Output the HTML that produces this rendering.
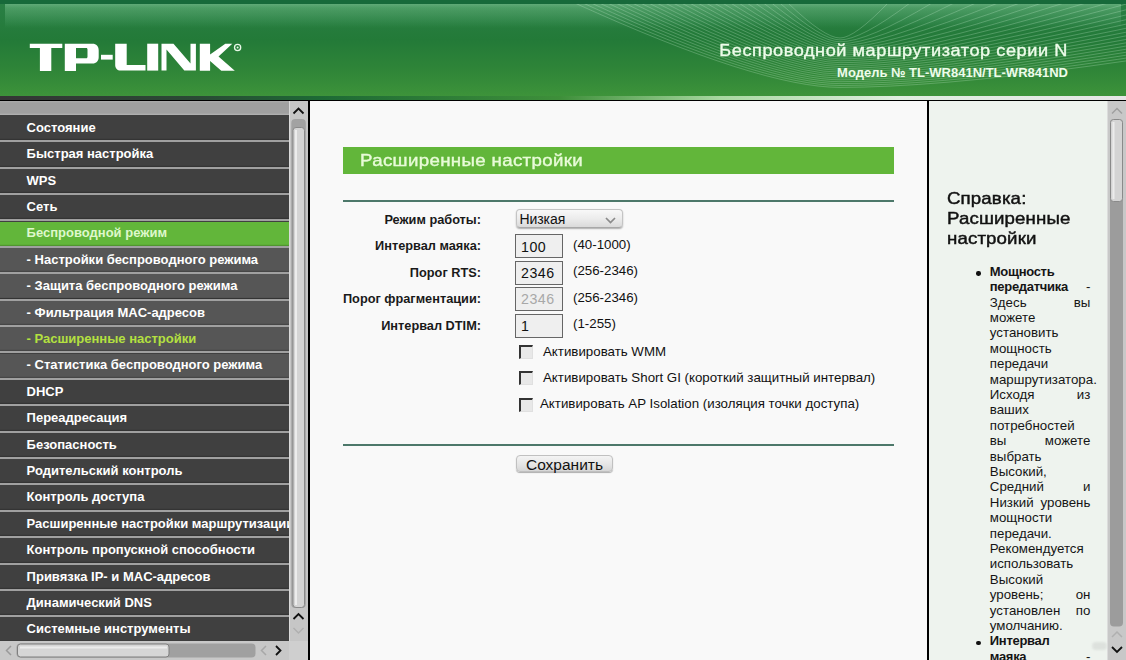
<!DOCTYPE html>
<html><head><meta charset="utf-8">
<style>
*{margin:0;padding:0;box-sizing:border-box}
html,body{width:1126px;height:660px;overflow:hidden;background:#f9f9f9;font-family:"Liberation Sans",sans-serif}
.abs{position:absolute}
#hdr{left:0;top:0;width:1126px;height:96px;background:linear-gradient(to bottom,#17693a 0px,#17693a 4px,#2a7f45 4px,#237a38 40px,#2f8538 70px,#3d933a 96px);overflow:hidden}
#gloss{left:5px;top:4px;width:1116px;height:24px;background:linear-gradient(to bottom,rgba(160,220,180,0.45) 0px,rgba(140,210,160,0.35) 4px,rgba(120,200,150,0.12) 18px,rgba(120,200,150,0) 24px)}
#strip{left:0;top:96px;width:1126px;height:4px;background:linear-gradient(to right,#353535 0px,#2a4a35 200px,#1d6a35 320px,#3e8f3a 560px,#a8d8a0 720px,#e0eee0 900px,#e6e6e6 1126px)}
#blk{left:0;top:100px;width:1126px;height:1px;background:#000}
.ttl{color:#eefcea;white-space:nowrap;text-align:right;right:58px}
/* sidebar */
#side{left:0;top:101px;width:289px;height:540px;background:#404040;overflow:hidden}
#sidetop{left:0;top:0;width:289px;height:14px;background:linear-gradient(#acacac,#a0a0a0 2px,#a0a0a0 12px,#b4b4b4)}
.rw{position:absolute;left:0;width:289px}
.tx{position:absolute;left:26.6px;font-weight:bold;font-size:13px;line-height:14px;white-space:nowrap;color:#fff}
.sep{position:absolute;left:0;width:289px;height:2.2px;background:#a0a0a0;box-shadow:0 -1.2px 0 rgba(0,0,0,0.18)}
#vsb{left:289px;top:101px;width:20px;height:540px;background:#c6c6c6}
#vline{left:308px;top:101px;width:2px;height:559px;background:#000}
#hsb{left:0;top:641px;width:289px;height:19px;background:#c8c8c8}
#corner{left:289px;top:641px;width:19px;height:19px;background:#cfcfcf}
/* main */
#main{left:310px;top:101px;width:617px;height:559px;background:#f9f9f9}
#vline2{left:927px;top:101px;width:2px;height:559px;background:#000}
#help{left:929px;top:101px;width:178px;height:559px;background:#eef3ee}
#hvsb{left:1107px;top:101px;width:19px;height:559px;background:#c8c8c8}
.lbl{position:absolute;right:645px;font-weight:bold;font-size:12.75px;line-height:14px;color:#1a1a1a;white-space:nowrap}
.inp{position:absolute;left:515px;width:48px;height:24px;border:1px solid #666;background:#efefef;font-size:14.2px;line-height:15px;letter-spacing:0.5px;padding:4.3px 0 0 5px;color:#111}
.rng{position:absolute;left:573px;font-size:13.3px;line-height:15px;color:#111;white-space:nowrap}
.cb{position:absolute;left:519px;width:14px;height:14px;border-top:2px solid #333;border-left:2px solid #333;border-right:1px solid #e0e0e0;border-bottom:1px solid #e0e0e0;background:#e8e8e8}
.cbt{position:absolute;font-size:13.3px;line-height:15px;color:#111;white-space:nowrap}
.sel{border:1px solid #c4c4c4;border-bottom-color:#a8a8a8;border-radius:4px;background:linear-gradient(#f8f8f8,#ececec 50%,#dadada);box-shadow:0 1px 1.5px rgba(0,0,0,0.3);font-size:14px;line-height:18.2px;padding-left:2.6px;color:#111;letter-spacing:-0.05px}
.btn{border:1px solid #c0c0c0;border-radius:4px;background:linear-gradient(#f4f4f4,#e4e4e4 60%,#d6d6d6);box-shadow:0 1px 1px rgba(0,0,0,0.3);font-size:15.5px;line-height:16.5px;padding-top:0.5px;text-align:center;color:#111}
.hl{position:absolute;left:989.8px;width:100.6px;font-size:13.3px;line-height:15.4px;color:#151515;white-space:nowrap}
.hj{display:flex;justify-content:space-between}
.hl b{font-size:13px;letter-spacing:-0.3px}
.bul{width:4.3px;height:4.3px;border-radius:50%;background:#111}
.help p{margin:0}
</style></head><body>
<div id="hdr" class="abs">
  <div id="gloss" class="abs"></div>
  <svg class="abs" style="left:0;top:4px" width="1126" height="92" viewBox="0 4 1126 92"><path d="M788.0 3Q824.4 38.0 840 38.0Q854.4 38.0 888.0 3M779.8 3Q821.9 39.9 840 39.9Q861.0 39.9 910.0 3M771.6 3Q819.5 41.8 840 41.8Q867.6 41.8 932.0 3M763.4 3Q817.0 43.7 840 43.7Q874.2 43.7 954.0 3M755.2 3Q814.6 45.6 840 45.6Q880.8 45.6 976.0 3M747.0 3Q812.1 47.5 840 47.5Q887.4 47.5 998.0 3M738.8 3Q809.6 49.4 840 49.4Q894.0 49.4 1020.0 3M730.6 3Q807.2 51.3 840 51.3Q900.6 51.3 1042.0 3M722.4 3Q804.7 53.2 840 53.2Q907.2 53.2 1064.0 3M714.2 3Q802.3 55.1 840 55.1Q913.8 55.1 1086.0 3M706.0 3Q799.8 57.0 840 57.0Q920.4 57.0 1108.0 3M697.8 3Q797.3 58.9 840 58.9Q927.0 58.9 1130.0 3M689.6 3Q794.9 60.8 840 60.8Q933.6 60.8 1152.0 3M681.4 3Q792.4 62.7 840 62.7Q940.2 62.7 1174.0 3M673.2 3Q790.0 64.6 840 64.6Q946.8 64.6 1196.0 3M665.0 3Q787.5 66.5 840 66.5Q953.4 66.5 1218.0 3M656.8 3Q785.0 68.4 840 68.4Q960.0 68.4 1240.0 3M648.6 3Q782.6 70.3 840 70.3Q966.6 70.3 1262.0 3M640.4 3Q780.1 72.2 840 72.2Q973.2 72.2 1284.0 3M632.2 3Q777.7 74.1 840 74.1Q979.8 74.1 1306.0 3M624.0 3Q775.2 76.0 840 76.0Q986.4 76.0 1328.0 3M615.8 3Q772.7 77.9 840 77.9Q993.0 77.9 1350.0 3M607.6 3Q770.3 79.8 840 79.8Q999.6 79.8 1372.0 3M599.4 3Q767.8 81.7 840 81.7Q1006.2 81.7 1394.0 3M591.2 3Q765.4 83.6 840 83.6Q1012.8 83.6 1416.0 3M583.0 3Q762.9 85.5 840 85.5Q1019.4 85.5 1438.0 3M574.8 3Q760.4 87.4 840 87.4Q1026.0 87.4 1460.0 3" fill="none" stroke="#d0f4d8" stroke-opacity="0.26" stroke-width="1"/></svg>
  <svg class="abs" style="left:0;top:0" width="1126" height="96" viewBox="0 0 1126 96">
    <g fill="#ffffff">
      <path d="M29.8 43.7H62.3V48.1H51.3V70.9H39.9V48.1H29.8Z"/>
      <path d="M64.8 43.7H92.5C96.3 43.7 98.7 46.3 98.7 50.2V57C98.7 60.9 96.3 63.5 92.5 63.5H76V70.9H64.8ZM76 48.1V58.2H86.2C87.1 58.2 87.5 57.6 87.5 56.7V49.6C87.5 48.7 87.1 48.1 86.2 48.1Z"/>
      <path d="M101 54.8H112.7V59.6H101Z"/>
      <path d="M115.2 43.7H126.7V65.1H145.5V70.6H120.5C117.5 70.6 115.2 68.3 115.2 65.3Z"/>
      <path d="M147.2 43.7H158.2V70.6H147.2Z"/>
      <path d="M161.5 43.7H173.5L190.5 63.6V43.7H195.9V70.6H184.3L166.5 49.6V70.6H161.5Z"/>
      <path d="M199.8 43.7H210.1V54.5L225.3 43.7H232.3L218.5 56.5L234.8 70.8H221.3L210.1 61V70.8H199.8Z"/>
      <circle cx="237.6" cy="47.5" r="3.1" fill="none" stroke="#e8f8e8" stroke-width="1.3"/>
      <circle cx="237.6" cy="47.5" r="1" fill="#e8f8e8"/>
    </g>
  </svg>
  <div class="abs ttl" style="top:41px;font-size:16.5px;font-weight:normal;letter-spacing:0.5px;-webkit-text-stroke:0.35px #eefcea;right:58.5px;transform:scaleX(1.1);transform-origin:100% 50%">Беспроводной маршрутизатор серии N</div>
  <div class="abs ttl" style="top:64.7px;font-size:13px;font-weight:bold">Модель № TL-WR841N/TL-WR841ND</div>
</div>
<div id="strip" class="abs"></div>
<div id="blk" class="abs"></div>

<div id="side" class="abs">
  <div id="sidetop" class="abs"></div>
  <div class="rw" style="top:14.0px;height:25.0px;background:#404040"></div>
  <div class="sep" style="top:39.1px"></div>
  <div class="tx" style="top:19.8px;color:#ffffff">Состояние</div>
  <div class="rw" style="top:41.4px;height:24.0px;background:#404040"></div>
  <div class="sep" style="top:65.5px"></div>
  <div class="tx" style="top:46.2px;color:#ffffff">Быстрая настройка</div>
  <div class="rw" style="top:67.8px;height:24.0px;background:#404040"></div>
  <div class="sep" style="top:91.9px"></div>
  <div class="tx" style="top:72.6px;color:#ffffff">WPS</div>
  <div class="rw" style="top:94.2px;height:24.0px;background:#404040"></div>
  <div class="sep" style="top:118.3px"></div>
  <div class="tx" style="top:99.0px;color:#ffffff">Сеть</div>
  <div class="rw" style="top:120.6px;height:24.0px;background:#62b63a"></div>
  <div class="sep" style="top:144.7px"></div>
  <div class="tx" style="top:125.4px;color:#def8cc">Беспроводной режим</div>
  <div class="rw" style="top:147.0px;height:24.0px;background:#565656"></div>
  <div class="sep" style="top:171.1px"></div>
  <div class="tx" style="top:151.8px;color:#ffffff">- Настройки беспроводного режима</div>
  <div class="rw" style="top:173.4px;height:24.0px;background:#565656"></div>
  <div class="sep" style="top:197.5px"></div>
  <div class="tx" style="top:178.2px;color:#ffffff">- Защита беспроводного режима</div>
  <div class="rw" style="top:199.8px;height:24.0px;background:#565656"></div>
  <div class="sep" style="top:223.9px"></div>
  <div class="tx" style="top:204.6px;color:#ffffff">- Фильтрация MAC-адресов</div>
  <div class="rw" style="top:226.2px;height:24.0px;background:#565656"></div>
  <div class="sep" style="top:250.3px"></div>
  <div class="tx" style="top:231.0px;color:#b4e040">- Расширенные настройки</div>
  <div class="rw" style="top:252.6px;height:24.0px;background:#565656"></div>
  <div class="sep" style="top:276.7px"></div>
  <div class="tx" style="top:257.4px;color:#ffffff">- Статистика беспроводного режима</div>
  <div class="rw" style="top:279.0px;height:24.0px;background:#404040"></div>
  <div class="sep" style="top:303.1px"></div>
  <div class="tx" style="top:283.8px;color:#ffffff">DHCP</div>
  <div class="rw" style="top:305.4px;height:24.0px;background:#404040"></div>
  <div class="sep" style="top:329.5px"></div>
  <div class="tx" style="top:310.2px;color:#ffffff">Переадресация</div>
  <div class="rw" style="top:331.8px;height:24.0px;background:#404040"></div>
  <div class="sep" style="top:355.9px"></div>
  <div class="tx" style="top:336.6px;color:#ffffff">Безопасность</div>
  <div class="rw" style="top:358.2px;height:24.0px;background:#404040"></div>
  <div class="sep" style="top:382.3px"></div>
  <div class="tx" style="top:363.0px;color:#ffffff">Родительский контроль</div>
  <div class="rw" style="top:384.6px;height:24.0px;background:#404040"></div>
  <div class="sep" style="top:408.7px"></div>
  <div class="tx" style="top:389.4px;color:#ffffff">Контроль доступа</div>
  <div class="rw" style="top:411.0px;height:24.0px;background:#404040"></div>
  <div class="sep" style="top:435.1px"></div>
  <div class="tx" style="top:415.8px;color:#ffffff">Расширенные настройки маршрутизации</div>
  <div class="rw" style="top:437.4px;height:24.0px;background:#404040"></div>
  <div class="sep" style="top:461.5px"></div>
  <div class="tx" style="top:442.2px;color:#ffffff">Контроль пропускной способности</div>
  <div class="rw" style="top:463.8px;height:24.0px;background:#404040"></div>
  <div class="sep" style="top:487.9px"></div>
  <div class="tx" style="top:468.6px;color:#ffffff">Привязка IP- и MAC-адресов</div>
  <div class="rw" style="top:490.2px;height:24.0px;background:#404040"></div>
  <div class="sep" style="top:514.3px"></div>
  <div class="tx" style="top:495.0px;color:#ffffff">Динамический DNS</div>
  <div class="rw" style="top:516.6px;height:24.0px;background:#404040"></div>
  <div class="sep" style="top:540.7px"></div>
  <div class="tx" style="top:521.4px;color:#ffffff">Системные инструменты</div>
</div>
<div id="vsb" class="abs"></div>
<div class="abs" style="left:289px;top:101px;width:1px;height:540px;background:#dadada"></div>
<svg class="abs" style="left:289px;top:101px" width="19" height="540" viewBox="0 0 19 540">
  <path d="M4.5 12.5L9.5 7.5L14.5 12.5" fill="none" stroke="#111" stroke-width="1.8"/>
  <rect x="2.3" y="18" width="14.5" height="489" rx="4" fill="#a2a2a2"/>
  <rect x="4" y="26.5" width="11.5" height="480" rx="3" fill="#d4d4d4" stroke="#8a8a8a" stroke-width="1"/>
  <rect x="6" y="29" width="2" height="475" fill="#ececec"/>
  <path d="M4.5 518L9.5 513L14.5 518" fill="none" stroke="#111" stroke-width="1.8"/>
  <path d="M4.5 527L9.5 532L14.5 527" fill="none" stroke="#b0b0b0" stroke-width="1.5"/>
</svg>
<div id="hsb" class="abs"></div>
<svg class="abs" style="left:0;top:641px" width="289" height="19" viewBox="0 0 289 19">
  <path d="M11 5L6.5 9.5L11 14" fill="none" stroke="#9a9a9a" stroke-width="1.5"/>
  <rect x="16.5" y="2.5" width="239" height="14" rx="4" fill="#a0a0a0"/>
  <rect x="17.5" y="3" width="151.5" height="13" rx="3" fill="#d6d6d6" stroke="#7f7f7f" stroke-width="1"/>
  <rect x="20" y="5.5" width="147" height="2" fill="#ececec"/>
  <path d="M266 5L261.5 9.5L266 14" fill="none" stroke="#a8a8a8" stroke-width="1.5"/>
  <path d="M276 5L280.5 9.5L276 14" fill="none" stroke="#111" stroke-width="1.8"/>
</svg>
<div id="corner" class="abs"></div>
<div id="vline" class="abs"></div>

<div id="main" class="abs"></div>
<div class="abs" style="left:343px;top:147px;width:551px;height:27px;background:#62b63a"></div>
<div class="abs" style="left:360px;top:150.8px;font-size:17px;line-height:20px;font-weight:normal;letter-spacing:0.3px;-webkit-text-stroke:0.4px #e8fbd8;color:#e8fbd8;white-space:nowrap;transform:scaleX(1.1);transform-origin:0 0">Расширенные настройки</div>
<div class="abs" style="left:343px;top:200px;width:551px;height:1.6px;background:#4d786a"></div>
<div class="lbl" style="top:213px">Режим работы:</div>
<div class="lbl" style="top:239.4px">Интервал маяка:</div>
<div class="lbl" style="top:265.8px">Порог RTS:</div>
<div class="lbl" style="top:292.2px">Порог фрагментации:</div>
<div class="lbl" style="top:318.6px">Интервал DTIM:</div>
<div class="sel abs" style="left:515.8px;top:209px;width:107.6px;height:19px">Низкая<svg class="abs" style="right:6px;top:6.5px" width="11" height="7" viewBox="0 0 11 7"><path d="M1 1L5.5 5.5L10 1" fill="none" stroke="#8a8a8a" stroke-width="1.7"/></svg></div>
<div class="inp" style="top:234.4px">100</div>
<div class="inp" style="top:260.8px">2346</div>
<div class="inp" style="top:287.2px;color:#a8a8a8">2346</div>
<div class="inp" style="top:313.6px">1</div>
<div class="rng" style="top:237px">(40-1000)</div>
<div class="rng" style="top:263.4px">(256-2346)</div>
<div class="rng" style="top:289.8px">(256-2346)</div>
<div class="rng" style="top:316.2px">(1-255)</div>
<div class="cb" style="top:344.7px"></div>
<div class="cb" style="top:371.1px"></div>
<div class="cb" style="top:397.5px"></div>
<div class="cbt" style="left:543px;top:343.6px">Активировать WMM</div>
<div class="cbt" style="left:543px;top:370px">Активировать Short GI (короткий защитный интервал)</div>
<div class="cbt" style="left:540px;top:396.4px">Активировать AP Isolation (изоляция точки доступа)</div>
<div class="abs" style="left:343px;top:444px;width:551px;height:1.6px;background:#4d786a"></div>
<div class="btn abs" style="left:516px;top:455px;width:97px;height:17px">Сохранить</div>
<div id="vline2" class="abs"></div>
<div id="help" class="abs"></div>
<div class="abs" style="left:946.8px;top:189.2px;font-size:17px;line-height:20px;font-weight:normal;letter-spacing:0.1px;-webkit-text-stroke:0.45px #111;color:#111;white-space:nowrap;transform:scaleX(1.1);transform-origin:0 0">Справка:<br>Расширенные<br>настройки</div>
<div class="hl" style="top:263.89px"><b>Мощность</b></div>
<div class="hl hj" style="top:279.29px"><b>передатчика</b><span>-</span></div>
<div class="hl hj" style="top:294.69px"><span>Здесь</span><span>вы</span></div>
<div class="hl" style="top:310.09px">можете</div>
<div class="hl" style="top:325.49px">установить</div>
<div class="hl" style="top:340.89px">мощность</div>
<div class="hl" style="top:356.29px">передачи</div>
<div class="hl" style="top:371.69px">маршрутизатора.</div>
<div class="hl hj" style="top:387.09px"><span>Исходя</span><span>из</span></div>
<div class="hl" style="top:402.49px">ваших</div>
<div class="hl" style="top:417.89px">потребностей</div>
<div class="hl hj" style="top:433.29px"><span>вы</span><span>можете</span></div>
<div class="hl" style="top:448.69px">выбрать</div>
<div class="hl" style="top:464.09px">Высокий,</div>
<div class="hl hj" style="top:479.49px"><span>Средний</span><span>и</span></div>
<div class="hl hj" style="top:494.89px"><span>Низкий</span><span>уровень</span></div>
<div class="hl" style="top:510.29px">мощности</div>
<div class="hl" style="top:525.69px">передачи.</div>
<div class="hl" style="top:541.09px">Рекомендуется</div>
<div class="hl" style="top:556.49px">использовать</div>
<div class="hl" style="top:571.89px">Высокий</div>
<div class="hl hj" style="top:587.29px"><span>уровень;</span><span>он</span></div>
<div class="hl hj" style="top:602.69px"><span>установлен</span><span>по</span></div>
<div class="hl" style="top:618.09px">умолчанию.</div>
<div class="hl" style="top:633.49px"><b>Интервал</b></div>
<div class="hl hj" style="top:648.89px"><b>маяка</b><span>-</span></div>
<div class="abs bul" style="left:976.3px;top:271.4px"></div>
<div class="abs bul" style="left:976.3px;top:641.00px"></div>
<div id="hvsb" class="abs"></div>
<div class="abs" style="left:1107px;top:101px;width:1px;height:559px;background:#dcdcdc"></div>
<svg class="abs" style="left:1107px;top:101px" width="19" height="559" viewBox="0 0 19 559">
  <path d="M5 12.5L10 7.5L15 12.5" fill="none" stroke="#a0a0a0" stroke-width="1.5"/>
  <rect x="3" y="18.5" width="13" height="507" rx="4" fill="#9c9c9c"/>
  <rect x="3.5" y="18.5" width="12" height="82" rx="3" fill="#d4d4d4" stroke="#8a8a8a" stroke-width="1"/>
  <rect x="5.5" y="21" width="2" height="77" fill="#ececec"/>
  <path d="M5 536L10 531L15 536" fill="none" stroke="#b0b0b0" stroke-width="1.5"/>
  <path d="M5 546L10 551L15 546" fill="none" stroke="#111" stroke-width="1.8"/>
</svg>
<div class="abs" style="left:1092px;top:642px;width:15px;height:8px;border-radius:4px;background:#d2d6d2;opacity:0.6;filter:blur(1px)"></div>
</body></html>
